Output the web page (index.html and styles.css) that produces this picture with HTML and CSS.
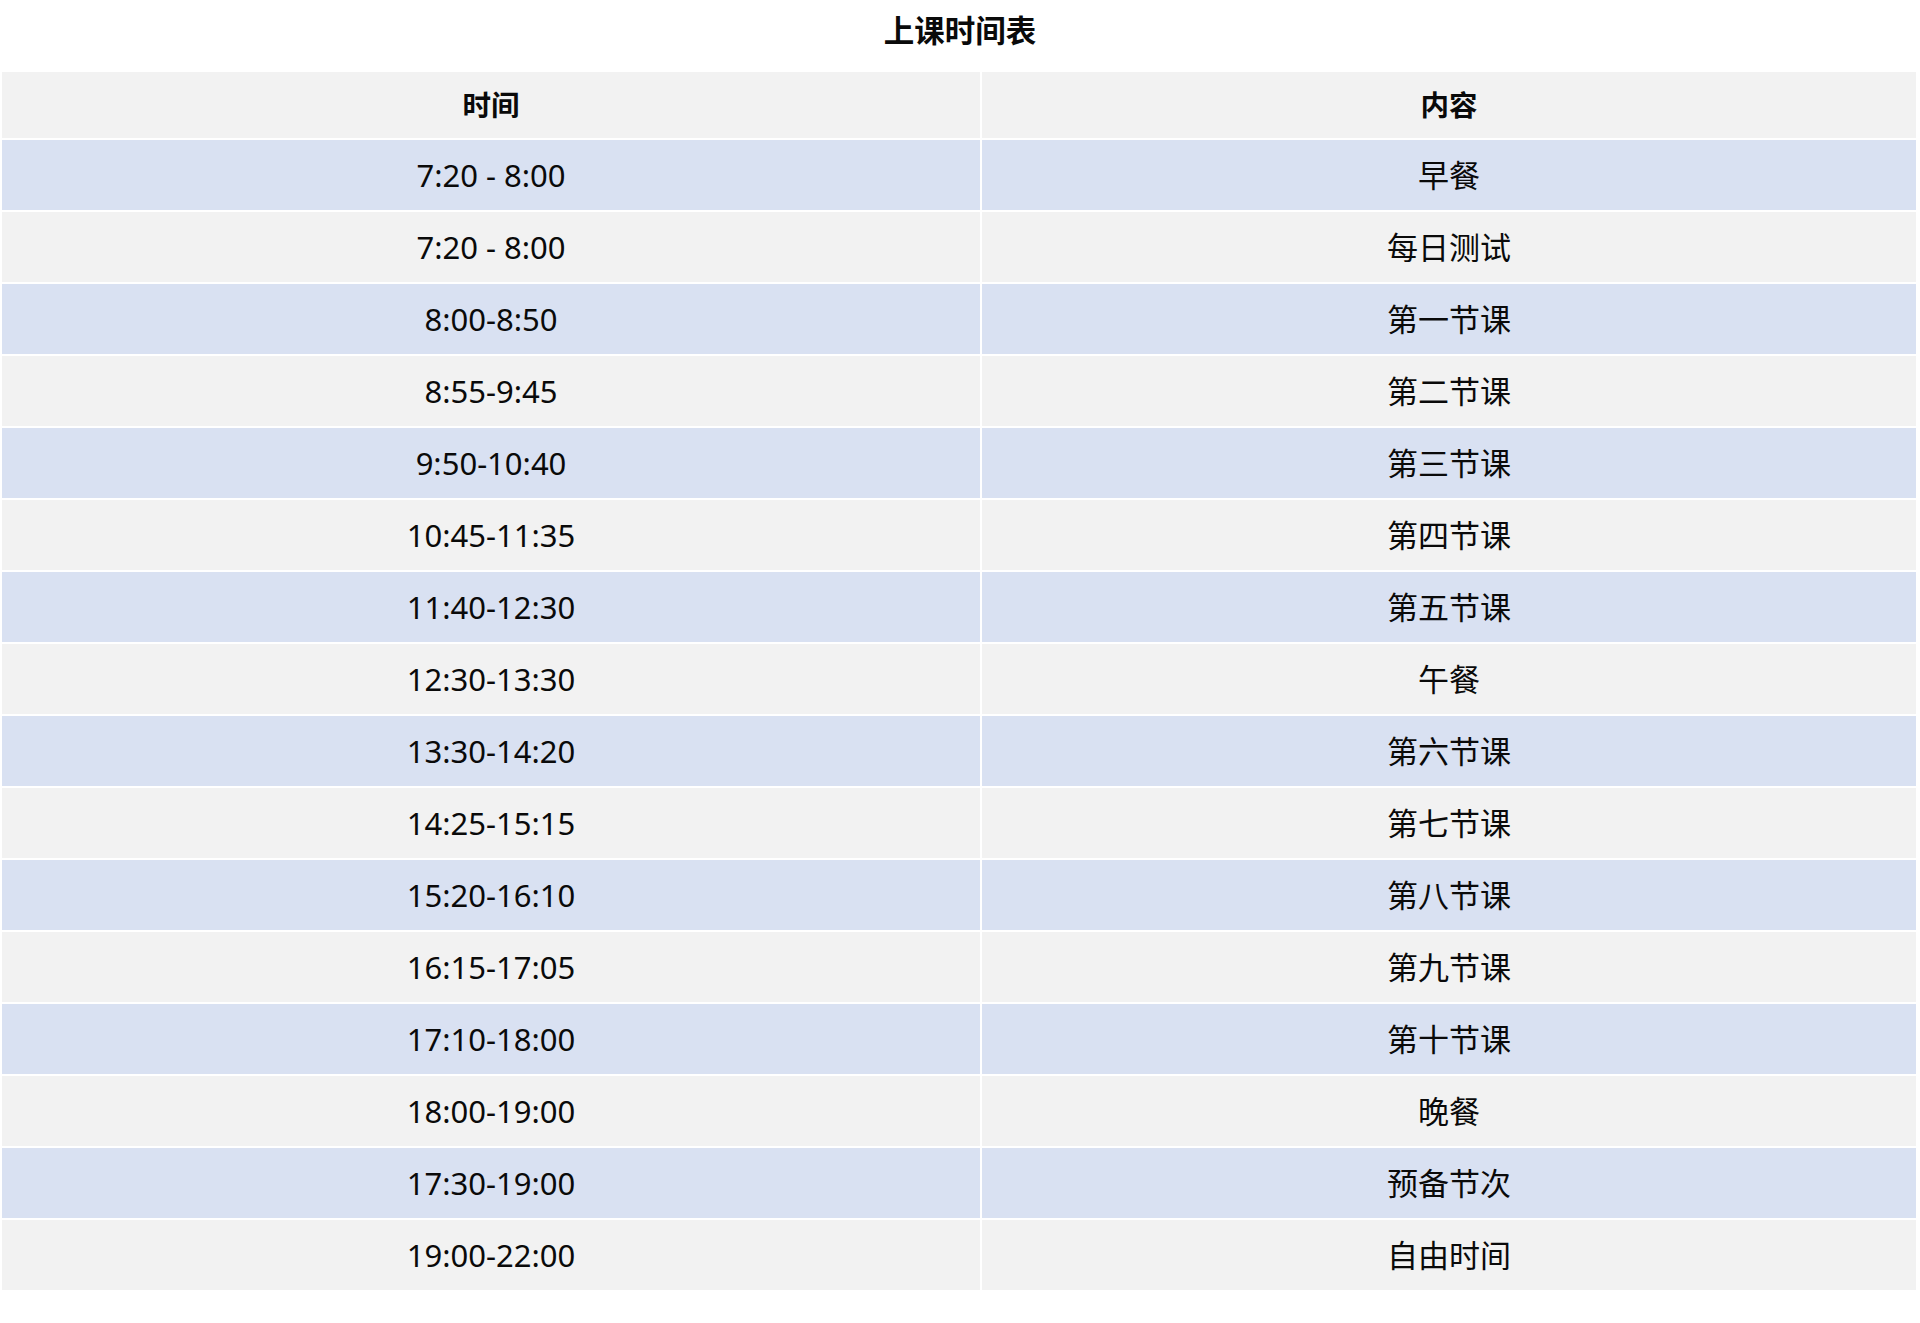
FILE: index.html
```html
<!DOCTYPE html>
<html lang="zh-CN">
<head>
<meta charset="utf-8">
<title>上课时间表</title>
<link rel="stylesheet" href="styles.css">
</head>
<body>
<div class="page">
  <h1 class="title">上课时间表</h1>
  <table class="schedule">
    <colgroup>
      <col class="col-time">
      <col class="col-content">
    </colgroup>
    <thead>
      <tr><th>时间</th><th>内容</th></tr>
    </thead>
    <tbody>
      <tr class="odd"><td>7:20 - 8:00</td><td class="cjk">早餐</td></tr>
      <tr class="even"><td>7:20 - 8:00</td><td class="cjk">每日测试</td></tr>
      <tr class="odd"><td>8:00-8:50</td><td class="cjk">第一节课</td></tr>
      <tr class="even"><td>8:55-9:45</td><td class="cjk">第二节课</td></tr>
      <tr class="odd"><td>9:50-10:40</td><td class="cjk">第三节课</td></tr>
      <tr class="even"><td>10:45-11:35</td><td class="cjk">第四节课</td></tr>
      <tr class="odd"><td>11:40-12:30</td><td class="cjk">第五节课</td></tr>
      <tr class="even"><td>12:30-13:30</td><td class="cjk">午餐</td></tr>
      <tr class="odd"><td>13:30-14:20</td><td class="cjk">第六节课</td></tr>
      <tr class="even"><td>14:25-15:15</td><td class="cjk">第七节课</td></tr>
      <tr class="odd"><td>15:20-16:10</td><td class="cjk">第八节课</td></tr>
      <tr class="even"><td>16:15-17:05</td><td class="cjk">第九节课</td></tr>
      <tr class="odd"><td>17:10-18:00</td><td class="cjk">第十节课</td></tr>
      <tr class="even"><td>18:00-19:00</td><td class="cjk">晚餐</td></tr>
      <tr class="odd"><td>17:30-19:00</td><td class="cjk">预备节次</td></tr>
      <tr class="even"><td>19:00-22:00</td><td class="cjk">自由时间</td></tr>
    </tbody>
  </table>
</div>
</body>
</html>
```

FILE: styles.css
```css
html, body {
  margin: 0;
  padding: 0;
  background: #ffffff;
}

body {
  font-family: "Noto Sans", "Noto Sans CJK SC", sans-serif;
  color: #0a0a0a;
}

.page {
  width: 1920px;
}

.title {
  margin: 0;
  height: 70px;
  line-height: 60px;
  font-size: 30.5px;
  font-weight: 700;
  text-align: center;
  font-family: "Noto Sans", "Noto Sans CJK SC", sans-serif;
  color: #0a0a0a;
}

.schedule {
  width: 1918px;
  border-collapse: separate;
  border-spacing: 2px;
  table-layout: fixed;
}

.col-time {
  width: 978px;
}

.col-content {
  width: 934px;
}

.schedule th,
.schedule td {
  padding: 0;
  text-align: center;
  vertical-align: middle;
  font-size: 31px;
}

.schedule th {
  height: 63px;
  padding-bottom: 3px;
  background: #f2f2f2;
  font-weight: 700;
  font-size: 28.5px;
}

.schedule td {
  height: 70px;
  font-weight: 400;
}

.schedule td.cjk {
  height: 67px;
  padding-bottom: 3px;
}

.schedule .odd td {
  background: #d9e1f2;
}

.schedule .even td {
  background: #f2f2f2;
}
```
